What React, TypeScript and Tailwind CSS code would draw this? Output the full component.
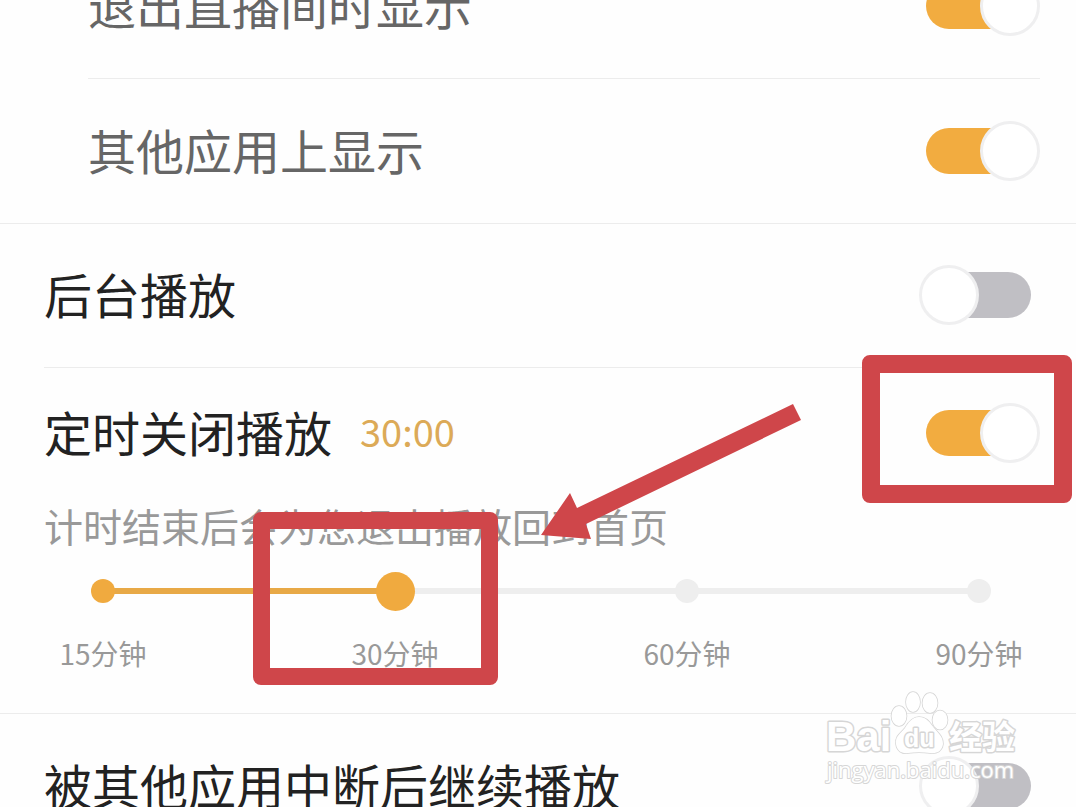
import { useState } from "react";

const stops = ["15分钟", "30分钟", "60分钟", "90分钟"];

export default function App() {
  const [active, setActive] = useState(1);

  return (
    <main className="relative h-screen overflow-hidden bg-[#fefefe] font-['Noto_Sans_CJK_SC',sans-serif]">
      {/* Small window options, first one is scrolled partly out of view */}
      <section className="-mt-[66px] border-b border-[#ececec] pl-[88px] pr-9">
        <div className="border-b border-[#ececec]">
          <SettingRow label="退出直播间时显示" nested defaultChecked />
        </div>
        <SettingRow label="其他应用上显示" nested defaultChecked />
      </section>

      <section className="-mt-px pl-11 pr-9">
        <div className="border-b border-[#ececec]">
          <SettingRow label="后台播放" />
        </div>
      </section>

      {/* Sleep timer */}
      <section className="relative border-b border-[#ececec] pb-[29px]">
        <div className="flex h-[130px] items-center justify-between pl-11 pr-9">
          <div className="flex items-center gap-7 pb-1">
            <label
              htmlFor="定时关闭播放"
              className="text-[48px] leading-[60px] text-[#222222]"
            >
              定时关闭播放
            </label>
            <span className="text-[38px] leading-[60px] text-[#dcaa57]">30:00</span>
          </div>
          <div className="relative">
            <Switch id="定时关闭播放" defaultChecked />
            <div
              aria-hidden
              className="pointer-events-none absolute -left-[57px] -top-12 h-[148px] w-[210px] rounded-lg border-[18px] border-[#cf464a]"
            />
          </div>
        </div>

        <p className="pb-1.5 pl-11 text-[39px] leading-[54px] text-[#999999]">
          计时结束后会为您退出播放回到首页
        </p>

        <div className="pl-[59px] pr-[53px]">
          <div className="relative flex h-[66px] items-center justify-between">
            <div className="absolute inset-x-11 h-1.5 bg-[#eeeeee]">
              <div
                className="h-full bg-[#e8a947]"
                style={{ width: `${(active / (stops.length - 1)) * 100}%` }}
              />
            </div>
            {stops.map((stop, i) => (
              <div key={stop} className="relative flex w-[88px] justify-center">
                <Dot filled={i <= active} large={i === active} />
              </div>
            ))}
            <input
              type="range"
              aria-label="定时时长"
              min={0}
              max={stops.length - 1}
              value={active}
              onChange={(e) => setActive(Number(e.target.value))}
              className="absolute inset-x-8 h-full cursor-pointer opacity-0"
            />
          </div>
          <div className="flex justify-between pb-0.5 text-[28px] leading-[58px] text-[#999999]">
            {stops.map((stop) => (
              <span key={stop} className="w-[88px] text-center">
                {stop}
              </span>
            ))}
          </div>
        </div>

        <div
          aria-hidden
          className="pointer-events-none absolute left-[253px] top-36 h-[173px] w-[245px] rounded-lg border-[17px] border-[#cf464a]"
        />
        <svg
          aria-hidden
          viewBox="0 0 260 136"
          className="pointer-events-none absolute left-[541px] top-9 h-[136px] w-[260px]"
        >
          <path d="M252 0L260 16L45 120L50 135L0 131L29 89L36 104Z" fill="#cf464a" />
        </svg>
      </section>

      <section className="pl-11 pr-9">
        <SettingRow label="被其他应用中断后继续播放" />
      </section>

      <Watermark />
    </main>
  );
}

function SettingRow({
  label,
  nested,
  defaultChecked,
}: {
  label: string;
  nested?: boolean;
  defaultChecked?: boolean;
}) {
  return (
    <div className="flex h-[144px] items-center justify-between">
      <label
        htmlFor={label}
        className={`pb-1 text-[48px] leading-[60px] ${nested ? "text-[#666666]" : "text-[#222222]"}`}
      >
        {label}
      </label>
      <Switch id={label} defaultChecked={defaultChecked} />
    </div>
  );
}

function Switch({ id, defaultChecked }: { id: string; defaultChecked?: boolean }) {
  return (
    <div className="relative flex h-[60px] w-[121px] items-center pl-[7px] pr-[9px]">
      <input
        id={id}
        type="checkbox"
        role="switch"
        defaultChecked={defaultChecked}
        className="peer h-[46px] w-full cursor-pointer appearance-none rounded-full bg-[#c0bfc4] checked:bg-[#f2ac40]"
      />
      <span className="pointer-events-none absolute left-0 size-[60px] rounded-full border-[3px] border-[#efeff0] bg-white peer-checked:left-auto peer-checked:right-0" />
    </div>
  );
}

function Dot({ filled, large }: { filled: boolean; large: boolean }) {
  const size = large ? "size-[39px]" : "size-6";
  const color = filled ? "bg-[#f0aa3f]" : "bg-[#eeeeee]";
  return <span className={`rounded-full ${size} ${color}`} />;
}

function Watermark() {
  return (
    <svg
      role="img"
      aria-label="Baidu 经验"
      viewBox="0 0 200 96"
      className="pointer-events-none absolute bottom-5 right-[55px] h-24 w-[200px]"
      fill="#ffffff"
      stroke="#d6d6d6"
      strokeWidth="3"
      strokeLinejoin="round"
      paintOrder="stroke"
    >
      <text x="5" y="60" fontSize="42" fontWeight="700" fontFamily="Liberation Sans, sans-serif">
        Bai
      </text>
      <g strokeWidth="1.6">
        <ellipse cx="78" cy="25" rx="7.5" ry="10" />
        <ellipse cx="92" cy="11" rx="7" ry="10" />
        <ellipse cx="109" cy="12" rx="7.5" ry="10" />
        <ellipse cx="119" cy="29" rx="7.5" ry="9.5" />
        <path d="M98 26C91 26 87 32 84 37C80 42 74 45 75 53C76 60 81 63 87 62C94 61 102 61 109 62C116 63 121 60 122 53C122 45 117 42 113 37C109 32 106 26 98 26Z" />
      </g>
      <text x="83" y="56" fontSize="25" fontWeight="700" fontFamily="Liberation Sans, sans-serif">
        du
      </text>
      <text
        x="128"
        y="58"
        fontSize="33"
        fontWeight="700"
        fontFamily="Noto Sans CJK SC, sans-serif"
      >
        经验
      </text>
      <text x="6" y="87" fontSize="22" strokeWidth="2" fontFamily="Open Sans, sans-serif">
        jingyan.baidu.com
      </text>
    </svg>
  );
}
